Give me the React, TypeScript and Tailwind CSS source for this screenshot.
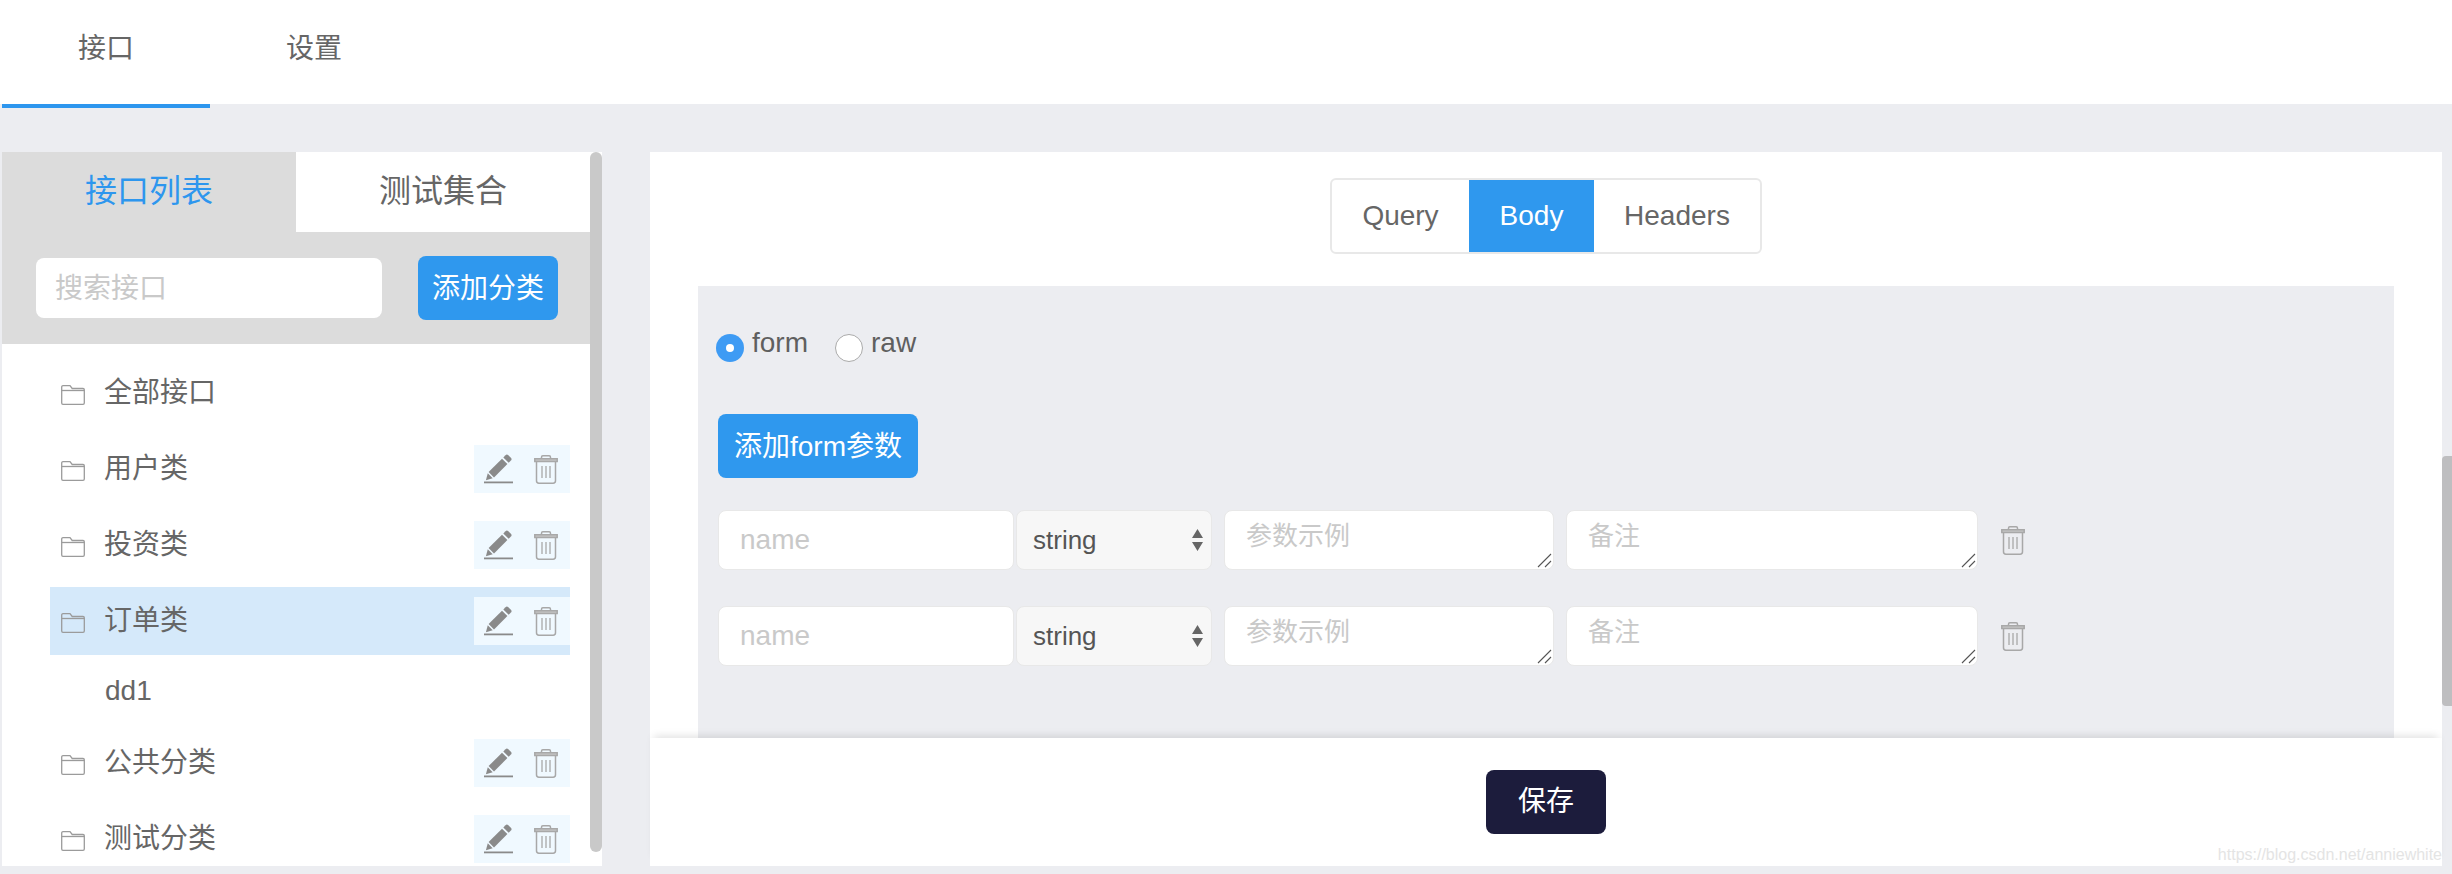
const font = "font-['Liberation_Sans','Noto_Sans_CJK_SC',sans-serif]";

const categories = [
  { name: "用户类", actions: true },
  { name: "投资类", actions: true },
  { name: "订单类", actions: true, active: true },
];

function FolderIcon() {
  return (
    <svg width="24" height="20" viewBox="0 0 24 20" fill="none" stroke="#9b9b9b" strokeWidth="1.3" className="mt-[4px] shrink-0">
      <path d="M.7 18V2A1.300 1.300 0 0 1 2 .7h7l2.200 2.800H22A1.300 1.300 0 0 1 23.300 4.800V18a1.300 1.300 0 0 1-1.300 1.300H2A1.300 1.300 0 0 1 .7 18z" />
      <path d="M.7 5.500h22.600" />
    </svg>
  );
}

function PencilIcon() {
  return (
    <svg width="29" height="30" viewBox="0 0 29 30" className="shrink-0">
      <path d="M21.500 1.200a2 2 0 0 1 2.800 0l2.600 2.600a2 2 0 0 1 0 2.800l-2.200 2.200-5.400-5.400z" fill="#8a8a8a" />
      <path d="M18 4.700l5.400 5.400L10 23.500 4.600 18.100z" fill="#8a8a8a" />
      <path d="M3.800 19.300l4.900 4.900-6.800 2z" fill="#8a8a8a" />
      <rect x="0" y="27.500" width="29" height="1.800" fill="#8a8a8a" />
    </svg>
  );
}

function TrashIcon() {
  return (
    <svg width="24" height="29" viewBox="0 0 24 29" fill="none" stroke="#a8a8a8" strokeWidth="1.500" className="shrink-0">
      <path d="M7.500 3.500V2.200A1.400 1.400 0 0 1 8.900.8h6.200a1.400 1.400 0 0 1 1.400 1.400v1.300" />
      <path d="M.8 3.800h22.400v2.600H.8z" fill="#c4c4c4" />
      <path d="M2.500 6.500v19.300a2.400 2.400 0 0 0 2.400 2.400h14.200a2.400 2.400 0 0 0 2.400-2.400V6.500" />
      <path d="M8 11v12M12 11v12M16 11v12" strokeWidth="1.300" />
    </svg>
  );
}

function RowActions() {
  return (
    <div className="flex h-[48px] w-[96px] items-center gap-[21px] bg-[#f0f9ff] pl-[10px]">
      <PencilIcon />
      <TrashIcon />
    </div>
  );
}

function CategoryRow({ name, actions, active }: { name: string; actions?: boolean; active?: boolean }) {
  return (
    <div className={`mb-[8px] flex h-[68px] items-center justify-between pl-[11px] ${active ? "bg-[#d5e9fa]" : ""}`}>
      <div className="flex items-center gap-[19px] text-[28px] text-[#666]">
        <FolderIcon />
        <span>{name}</span>
      </div>
      {actions && <RowActions />}
    </div>
  );
}

function ResizeGrip() {
  return (
    <svg width="16" height="16" viewBox="0 0 16 16" stroke="#555" strokeWidth="1.100" className="absolute bottom-[1px] right-[1px]">
      <path d="M2 15L15 2M9 15l6-6" />
    </svg>
  );
}

function ParamRow() {
  return (
    <div className="mb-[36px] flex items-center">
      <div className="flex h-[60px] w-[296px] items-center rounded-[8px] border border-[#e8e8e8] bg-white pl-[21px] text-[28px] text-[#c9c9c9]">name</div>
      <div className="ml-[2px] flex h-[60px] w-[196px] items-center justify-between rounded-[8px] border border-[#e8e8e8] bg-[#f7f7f7] pl-[16px] pr-[8px] text-[26px] text-[#555]">
        <span>string</span>
        <svg width="11" height="22" viewBox="0 0 11 22" fill="#666">
          <path d="M5.500 0L11 9H0zM5.500 22L0 13h11z" />
        </svg>
      </div>
      <div className="relative ml-[12px] h-[60px] w-[330px] rounded-[8px] border border-[#e8e8e8] bg-white pl-[21px] pt-[6px] text-[26px] text-[#c9c9c9]">
        参数示例
        <ResizeGrip />
      </div>
      <div className="relative ml-[12px] h-[60px] w-[412px] rounded-[8px] border border-[#e8e8e8] bg-white pl-[21px] pt-[6px] text-[26px] text-[#c9c9c9]">
        备注
        <ResizeGrip />
      </div>
      <div className="ml-[23px]">
        <TrashIcon />
      </div>
    </div>
  );
}

export default function App() {
  return (
    <div className={`flex h-[874px] w-[2452px] flex-col overflow-hidden bg-[#ecedf1] ${font}`}>
      <div className="flex h-[104px] shrink-0 bg-white pl-[2px]">
        <div className="relative flex h-full w-[208px] items-center justify-center pb-[6px] text-[28px] text-[#666]">
          接口
          <span className="absolute -bottom-[4px] left-0 h-[4px] w-full bg-[#2d96ee]" />
        </div>
        <div className="flex h-full w-[208px] items-center justify-center pb-[6px] text-[28px] text-[#666]">设置</div>
      </div>

      <div className="mt-[48px] flex h-[714px] pl-[2px]">
        <div className="flex h-full w-[600px] shrink-0 overflow-hidden bg-white">
          <div className="w-[588px] shrink-0">
            <div className="flex h-[80px] text-[32px]">
              <div className="flex w-[294px] items-center justify-center bg-[#dcdcdc] pb-[2px] text-[#2d96ee]">接口列表</div>
              <div className="flex w-[294px] items-center justify-center bg-white pb-[2px] text-[#666]">测试集合</div>
            </div>
            <div className="flex h-[112px] items-start justify-between bg-[#dcdcdc] pl-[34px] pr-[32px] pt-[24px]">
              <div className="mt-[2px] flex h-[60px] w-[346px] items-center rounded-[8px] bg-white pl-[19px] pt-[2px] text-[28px] text-[#c9c9c9]">搜索接口</div>
              <button type="button" className="h-[64px] w-[140px] rounded-[8px] bg-[#2f98ee] pt-[2px] text-[28px] text-white">添加分类</button>
            </div>
            <div className="pl-[48px] pr-[20px] pt-[15px]">
              <CategoryRow name="全部接口" />
              {categories.map((c) => (
                <CategoryRow key={c.name} name={c.name} actions={c.actions} active={c.active} />
              ))}
              <div className="-mt-[8px] flex h-[72px] items-center pl-[55px] text-[28px] text-[#666]">dd1</div>
              <div className="mt-[2px]">
                <CategoryRow name="公共分类" actions />
                <CategoryRow name="测试分类" actions />
              </div>
            </div>
          </div>
          <div className="h-[700px] w-[12px] rounded-[6px] bg-[#c9c9c9]" />
        </div>

        <div className="relative ml-[48px] flex h-full w-[1792px] shrink-0 flex-col bg-white">
          <div className="flex h-[134px] shrink-0 justify-center pt-[26px]">
            <div className="flex h-[76px] overflow-hidden rounded-[6px] border-2 border-[#e8e8e8] text-[28px] text-[#666]">
              <div className="flex w-[137px] items-center justify-center">Query</div>
              <div className="-my-[2px] flex w-[125px] items-center justify-center bg-[#2f98ee] text-white">Body</div>
              <div className="flex w-[166px] items-center justify-center">Headers</div>
            </div>
          </div>
          <div className="ml-[48px] w-[1696px] flex-1 bg-[#ecedf1] pl-[20px] pt-[48px]">
            <div className="flex h-[28px] items-start text-[28px] leading-[18px] text-[#5f5f5f]">
              <span className="-ml-[2px] flex h-[28px] w-[28px] items-center justify-center rounded-full bg-[#3e9bf4]">
                <span className="h-[8px] w-[8px] rounded-full bg-white" />
              </span>
              <span className="ml-[8px]">form</span>
              <span className="ml-[27px] h-[28px] w-[28px] rounded-full border border-[#aaa] bg-white" />
              <span className="ml-[8px]">raw</span>
            </div>
            <button type="button" className="mt-[52px] block h-[64px] w-[200px] rounded-[8px] bg-[#2f98ee] pt-[2px] text-[28px] text-white">添加form参数</button>
            <div className="mt-[32px]">
              <ParamRow />
              <ParamRow />
            </div>
          </div>
          <div className="absolute bottom-0 left-0 right-0 flex h-[128px] items-center justify-center overflow-visible bg-white shadow-[0_-6px_8px_-4px_rgba(0,0,0,0.12)]">
            <button type="button" className="h-[64px] w-[120px] rounded-[8px] bg-[#1c1c3c] text-[28px] text-white">保存</button>
            <span className="absolute bottom-0 right-0 text-[16px] leading-[22px] text-[#e4e4e4]">https://blog.csdn.net/anniewhite</span>
          </div>
        </div>

        <div className="flex h-full w-[10px] shrink-0 flex-col">
          <div className="mt-[304px] h-[250px] w-[10px] rounded-l-[4px] bg-[#bebec0]" />
        </div>
      </div>
    </div>
  );
}
